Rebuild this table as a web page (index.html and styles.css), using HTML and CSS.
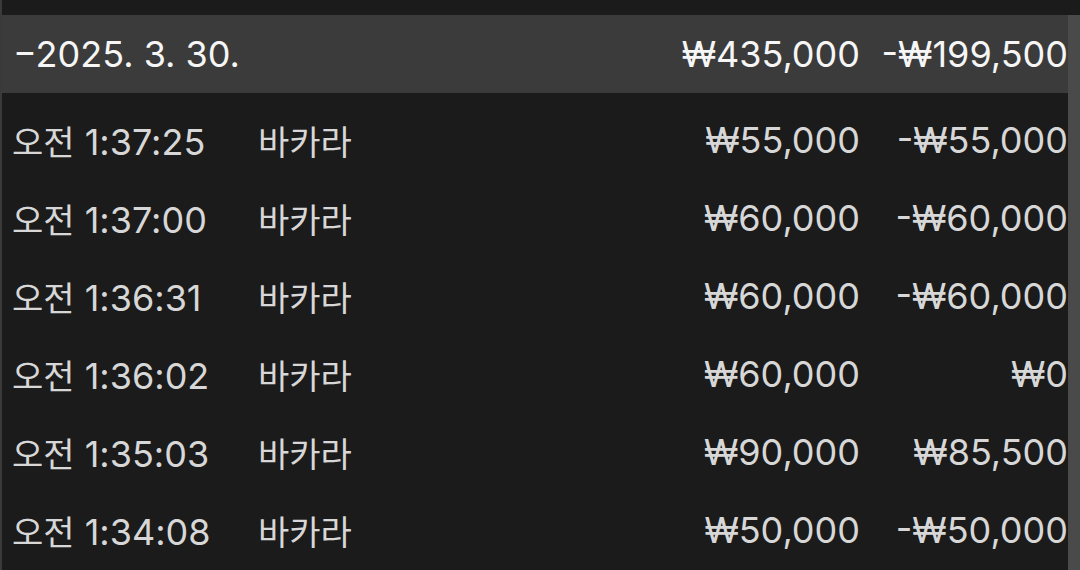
FILE: index.html
```html
<!DOCTYPE html>
<html lang="ko">
<head>
<meta charset="utf-8">
<link rel="stylesheet" href="styles.css">
</head>
<body>
<div class="frame">
  <div class="top"></div>
  <div class="content">
    <div class="table">
      <div class="row head">
        <div class="date">−2025. 3. 30.</div>
        <div class="amt">₩435,000</div>
        <div class="delta">-₩199,500</div>
      </div>
      <div class="row">
        <div class="time"><span class="ko">오전</span> 1:37:25</div>
        <div class="game ko">바카라</div>
        <div class="amt">₩55,000</div>
        <div class="delta">-₩55,000</div>
      </div>
      <div class="row">
        <div class="time"><span class="ko">오전</span> 1:37:00</div>
        <div class="game ko">바카라</div>
        <div class="amt">₩60,000</div>
        <div class="delta">-₩60,000</div>
      </div>
      <div class="row">
        <div class="time"><span class="ko">오전</span> 1:36:31</div>
        <div class="game ko">바카라</div>
        <div class="amt">₩60,000</div>
        <div class="delta">-₩60,000</div>
      </div>
      <div class="row">
        <div class="time"><span class="ko">오전</span> 1:36:02</div>
        <div class="game ko">바카라</div>
        <div class="amt">₩60,000</div>
        <div class="delta">₩0</div>
      </div>
      <div class="row">
        <div class="time"><span class="ko">오전</span> 1:35:03</div>
        <div class="game ko">바카라</div>
        <div class="amt">₩90,000</div>
        <div class="delta">₩85,500</div>
      </div>
      <div class="row">
        <div class="time"><span class="ko">오전</span> 1:34:08</div>
        <div class="game ko">바카라</div>
        <div class="amt">₩50,000</div>
        <div class="delta">-₩50,000</div>
      </div>
    </div>
    <div class="scroll"></div>
  </div>
</div>
</body>
</html>
```
FILE: styles.css
```css
html, body {
  margin: 0;
  padding: 0;
  background: #1b1b1b;
  width: 1080px;
  height: 570px;
  overflow: hidden;
}
.frame {
  height: 570px;
  border-left: 2px solid #3a3a3a;
  box-sizing: border-box;
  display: flex;
  flex-direction: column;
  font-family: Inter, "Noto Sans CJK KR", sans-serif;
  font-size: 36px;
  color: #d7d7d7;
}
.top {
  height: 15px;
  flex: none;
}
.content {
  flex: 1;
  display: flex;
}
.table {
  flex: 1;
  display: flex;
  flex-direction: column;
}
.scroll {
  width: 12px;
  flex: none;
  background: #4a4a4a;
}
.row {
  display: grid;
  grid-template-columns: 246px 1fr 180px 208px;
  align-items: center;
  height: 78px;
  padding: 16px 0 0 10px;
  box-sizing: border-box;
  white-space: nowrap;
}
.row.head {
  background: #3b3b3b;
  color: #f6f6f6;
  padding-top: 0;
}
.date {
  grid-column: 1 / 3;
  padding-left: 1px;
}
.ko {
  font-family: "Noto Sans CJK KR", sans-serif;
  font-size: 34px;
}
.amt, .delta {
  text-align: right;
}
```
